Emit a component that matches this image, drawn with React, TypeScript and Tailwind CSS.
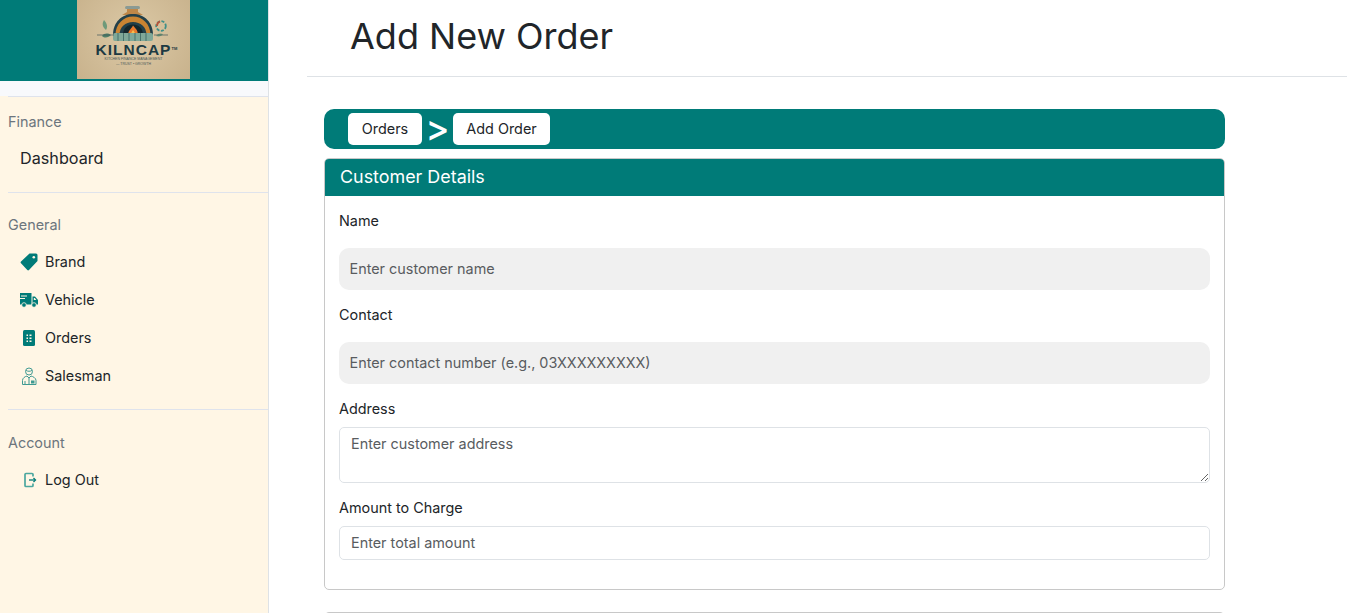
import React from "react";

function Logo() {
  return (
    <div className="relative w-[113px] h-[79px] overflow-hidden bg-[radial-gradient(circle_at_50%_45%,#dcc9a6,#c8b28c)]">
      <svg viewBox="0 0 113 79" className="absolute inset-0 w-full h-full blur-[0.4px]">
        <rect x="48" y="6" width="15" height="3" rx="1.500" fill="#8a9a94" />
        <path d="M50 9h11v3l5 3H45l5-3z" fill="#bf8748" />
        <path d="M36 35c0-13 9-21 20-21s20 8 20 21z" fill="#22404a" />
        <path d="M38.500 35c0-11 8-18.500 17.500-18.500S73.500 24 73.500 35h-4c0-8-6-13-13.500-13s-13.500 5-13.500 13z" fill="#c98432" />
        <path d="M46 35c0-7 4.500-10.500 10-10.500S66 28 66 35z" fill="#14262b" />
        <path d="M56 25.500c3 3.500 5.500 5.500 4.500 9.500h-9c-1-4 2.500-5.500 4.500-9.500z" fill="#e8792b" />
        <path d="M56 30c1 1.500 2.500 2.500 2 5h-4c-.5-2.500 1.500-3.500 2-5z" fill="#f6c14f" />
        <rect x="36" y="33" width="40" height="8" rx="2" fill="#7fa898" />
        <path d="M41 33v8M46.500 33v8M52 33v8M58 33v8M63.500 33v8M69 33v8" stroke="#2f5a57" strokeWidth="0.7" />
        <path d="M29 30c-4-3-4-7-2-10 3 3 4 7 2 10z" fill="#6f9a7a" />
        <path d="M25 36c2-3 6-3 9-1-2 2-6 4-9 1z" fill="#4f7f68" />
        <circle cx="84" cy="26" r="4.800" fill="none" stroke="#3f8f88" strokeWidth="1.800" strokeDasharray="3 1.500" />
        <path d="M80 26a4.800 4.800 0 0 1 3-4.600" fill="none" stroke="#b5553a" strokeWidth="1.800" />
        <path d="M79 36c2-3 5-3 7-2-1 2-4 3-7 2z" fill="#6f9a7a" />
        <path d="M20 35h17M77 35h14" stroke="#43565a" strokeWidth="0.7" />
      </svg>
      <div className="absolute left-0 right-0 top-[40px] text-center text-[15.5px] leading-[20px] font-bold tracking-[1px] text-[#1d3a42] font-['Liberation_Sans',sans-serif]">
        KILNCAP<span className="absolute top-[-1px] text-[4px] tracking-normal">TM</span>
      </div>
      <div className="absolute left-0 right-0 top-[56px] text-center text-[3.5px] leading-[6px] text-[#4b5a58] font-['Liberation_Sans',sans-serif]">
        KITCHEN FINANCE MANAGEMENT
      </div>
      <div className="absolute left-0 right-0 top-[61px] text-center text-[3.5px] leading-[6px] text-[#4b5a58] font-['Liberation_Sans',sans-serif]">
        — TRUST • GROWTH
      </div>
    </div>
  );
}

const TEAL = "#007b78";

function TagIcon() {
  return (
    <svg viewBox="0 0 18 18" className="w-[18px] h-[18px] shrink-0">
      <path d="M9.500.5h6.500a1.500 1.500 0 0 1 1.500 1.500V8l-8.500 9a1.200 1.200 0 0 1-1.700 0L1 10.200a1.200 1.200 0 0 1 0-1.700z" fill={TEAL} />
      <circle cx="13.800" cy="4.200" r="1.300" fill="#fff6e5" />
    </svg>
  );
}
function TruckIcon() {
  return (
    <svg viewBox="0 0 18 18" className="w-[18px] h-[18px] shrink-0">
      <path d="M0 2h11.500v11.500H0z" fill={TEAL} />
      <path d="M1 5h6M0 7.500h5" stroke="#fff6e5" strokeWidth="1" />
      <path d="M12.500 5.500h2.500l3 3.500v4.500h-5.500z" fill={TEAL} />
      <path d="M13.800 7h1l1.500 2h-2.500z" fill="#fff6e5" />
      <circle cx="4" cy="14" r="2.300" fill={TEAL} stroke="#fff6e5" strokeWidth="0.8" />
      <circle cx="14" cy="14" r="2.300" fill={TEAL} stroke="#fff6e5" strokeWidth="0.8" />
    </svg>
  );
}
function OrdersIcon() {
  return (
    <svg viewBox="0 0 18 18" className="w-[18px] h-[18px] shrink-0">
      <rect x="3" y="1" width="12" height="16" rx="1.500" fill={TEAL} />
      <path
        d="M6.500 5.500h1.500v1.500H6.500zM9.500 5.500h2v1.500h-2zM6.500 8.500h1.500V10H6.500zM9.500 8.500h2V10h-2zM6.500 11.500h1.500V13H6.500zM9.500 11.500h2V13h-2z"
        fill="#fff6e5"
      />
    </svg>
  );
}
function SalesmanIcon() {
  return (
    <svg viewBox="0 0 18 18" className="w-[18px] h-[18px] shrink-0" fill="none" stroke="#3f9a92" strokeWidth="1">
      <circle cx="9" cy="4.500" r="3.500" />
      <path d="M6 3.500c2 1 4 1 6 0" />
      <path d="M2.500 17.500v-4c0-2.500 2.500-4 4.500-4.500l2 2 2-2c2 .5 5 2 5 4.500v4z" />
      <path d="M5 17.500v-3.500M9 11v6.500" />
      <rect x="11" y="13.500" width="3.500" height="3" fill="#3f9a92" stroke="none" />
    </svg>
  );
}
function LogoutIcon() {
  return (
    <svg viewBox="0 0 18 18" className="w-[18px] h-[18px] shrink-0" fill="none" stroke="#4ba79f" strokeWidth="1.700">
      <path d="M13 5.500V3.500a1 1 0 0 0-1-1H6a1 1 0 0 0-1 1v11a1 1 0 0 0 1 1h6a1 1 0 0 0 1-1v-2" />
      <path d="M9 9h6" stroke={TEAL} strokeWidth="1.300" />
      <path d="M13.500 7 15.500 9l-2 2" stroke={TEAL} strokeWidth="1.300" />
    </svg>
  );
}

function NavItem({ icon, label }: { icon: React.ReactNode; label: string }) {
  return (
    <div className="flex items-center h-[38px] pl-5 gap-[7px] text-[14.4px] text-[#212529]">
      <span className="w-[18px] shrink-0 flex items-center justify-center">{icon}</span>
      <span>{label}</span>
    </div>
  );
}

function Section({ title }: { title: string }) {
  return <div className="px-2 h-[21px] leading-[21px] text-[14.4px] text-[#6c757d]">{title}</div>;
}

function FilledField({ label, placeholder }: { label: string; placeholder: string }) {
  return (
    <div>
      <label className="block h-[21px] leading-[21px] text-[14.4px] text-[#212529] mb-[17px]">{label}</label>
      <input
        placeholder={placeholder}
        className="block w-full h-[42px] rounded-[10px] bg-[#f0f0f0] pl-[10.5px] pr-[11px] pb-[2px] text-[14.4px] text-[#212529] placeholder:text-[#595c5f] outline-none"
      />
    </div>
  );
}

export default function App() {
  return (
    <div className="flex h-[613px] overflow-hidden bg-white font-['Inter',sans-serif] text-[#212529]">
      <aside className="w-[269px] shrink-0 h-full border-r border-[#dee2e6] flex flex-col bg-[#fff6e5]">
        <div className="h-[81px] bg-[#007b78] shrink-0 flex justify-center">
          <div className="pr-[1px]">
            <Logo />
          </div>
        </div>
        <div className="h-[15px] bg-[#f8f9fc] shrink-0" />
        <div className="ml-2 border-t border-[#dfe3ec] shrink-0" />
        <div className="pt-[14px]">
          <Section title="Finance" />
          <div className="h-[40px] mt-[6px] flex items-center pl-5 text-[16.2px] text-[#212529]">Dashboard</div>
          <div className="ml-2 mt-[14px] border-t border-[#dfe3ec]" />
          <div className="pt-[21px]">
            <Section title="General" />
            <div className="mt-[8px]">
              <NavItem icon={<TagIcon />} label="Brand" />
              <NavItem icon={<TruckIcon />} label="Vehicle" />
              <NavItem icon={<OrdersIcon />} label="Orders" />
              <NavItem icon={<SalesmanIcon />} label="Salesman" />
            </div>
          </div>
          <div className="ml-2 mt-[14px] border-t border-[#dfe3ec]" />
          <div className="pt-[22px]">
            <Section title="Account" />
            <div className="mt-[8px]">
              <NavItem icon={<LogoutIcon />} label="Log Out" />
            </div>
          </div>
        </div>
      </aside>

      <main className="flex-1 min-w-0 pl-[38px]">
        <div className="h-[77px] border-b border-[#dee2e6] pl-[43px] pt-[12px]">
          <h1 className="text-[36px] leading-[48px] font-normal text-[#212529]">Add New Order</h1>
        </div>
        <div className="w-[901px] ml-[17px] mt-[32px]">
          <div className="h-[40px] rounded-[10px] bg-[#007b78] flex items-center pl-6">
            <span className="h-[32px] w-[74px] justify-center flex items-center bg-white rounded-[5px] text-[14.4px] text-[#212529]">Orders</span>
            <span className="w-[31px] text-center text-[36px] leading-[32px] pb-[3px] font-medium text-white">&gt;</span>
            <span className="h-[32px] w-[97px] justify-center flex items-center bg-white rounded-[5px] text-[14.4px] text-[#212529]">Add Order</span>
          </div>
          <div className="mt-[9px] h-[432px] border border-[#c8c8c8] rounded-[5px] overflow-hidden">
            <div className="h-[37px] bg-[#007b78] flex items-center pl-[15px] pb-[1px] text-[17.9px] text-white">Customer Details</div>
            <div className="px-[14px] pt-[14px] flex flex-col">
              <FilledField label="Name" placeholder="Enter customer name" />
              <div className="mt-[14px]">
                <FilledField label="Contact" placeholder="Enter contact number (e.g., 03XXXXXXXXX)" />
              </div>
              <div className="mt-[14px]">
                <label className="block h-[21px] leading-[21px] text-[14.4px] mb-[8px]">Address</label>
                <textarea
                  placeholder="Enter customer address"
                  className="block w-full h-[56px] rounded-[5px] border border-[#dee2e6] px-[11px] pt-[5px] pb-[6px] text-[14.4px] leading-[21px] placeholder:text-[#595c5f] outline-none"
                />
              </div>
              <div className="mt-[14px]">
                <label className="block h-[21px] leading-[21px] text-[14.4px] mb-[8px]">Amount to Charge</label>
                <input
                  placeholder="Enter total amount"
                  className="block w-full h-[34px] rounded-[5px] border border-[#dee2e6] px-[11px] pb-[2px] text-[14.4px] placeholder:text-[#595c5f] outline-none"
                />
              </div>
            </div>
          </div>
          <div className="mt-[22px] h-[40px] border border-[#c8c8c8] rounded-[5px]" />
        </div>
      </main>
    </div>
  );
}
